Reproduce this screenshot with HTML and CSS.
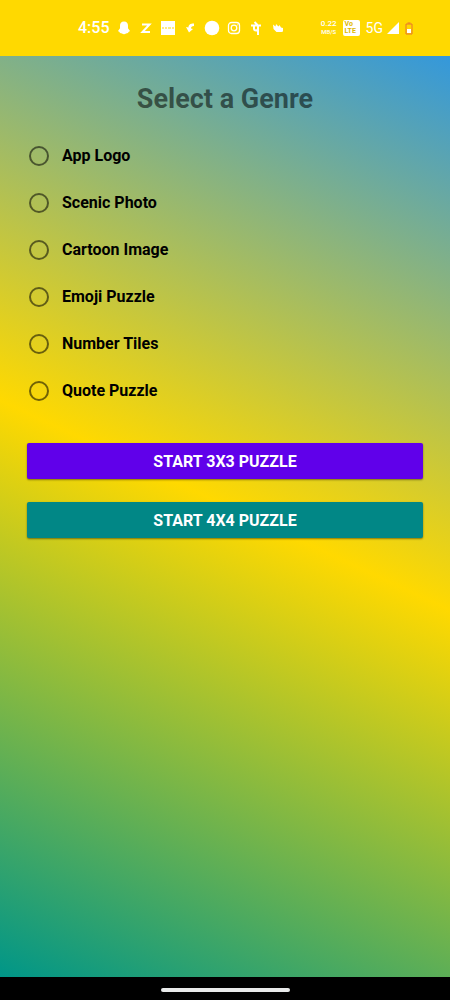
FILE: index.html
```html
<!DOCTYPE html>
<html lang="en">
<head>
<meta charset="utf-8">
<meta name="viewport" content="width=device-width, initial-scale=1">
<title>Select a Genre</title>
<link rel="stylesheet" href="styles.css">
</head>
<body>
<div class="screen">
  <header class="status">
    <div class="status-left">
      <span class="clock">4:55</span>
      <svg class="icon" viewBox="0 0 16 16" aria-hidden="true"><path d="M8 1.500c-2.800 0-4 1.800-4 4.200v2.600L2 11c1 .5 1.500 1 2 2 1.500 0 2.500 1.200 4 1.200s2.500-1.200 4-1.200c.5-1 1-1.500 2-2l-2-2.700V5.700c0-2.400-1.200-4.200-4-4.200z"/></svg>
      <svg class="icon line" viewBox="0 0 16 16" aria-hidden="true"><path d="M4 4.500h7.500L4.500 12H12"/></svg>
      <svg class="icon" viewBox="0 0 16 16" aria-hidden="true"><path d="M1 1h14v14H1z"/><path class="cut" d="M2 8h2m1 0h2m1 0h3m1 0h2"/></svg>
      <svg class="icon" viewBox="0 0 16 16" aria-hidden="true"><path d="M12 3.500C8 3.500 6.500 5 6.500 7.500L4 7l3 5.500L11 9 9 8.500c0-1.500.8-2.500 3-2.500z"/></svg>
      <svg class="icon" viewBox="0 0 16 16" aria-hidden="true"><circle cx="8" cy="8" r="7.300"/></svg>
      <svg class="icon thin" viewBox="0 0 16 16" aria-hidden="true"><rect x="2.500" y="2.500" width="11" height="11" rx="3"/><circle cx="8" cy="8" r="2.800"/><path d="M11 4.800h.6"/></svg>
      <svg class="icon line" viewBox="0 0 16 16" aria-hidden="true"><path d="M3 5.500h10M6 5.500v3c0 2.500 4 2.500 4 0M10 5.500V15M9.500 5L6.500 2"/></svg>
      <svg class="icon" viewBox="0 0 16 16" aria-hidden="true"><path d="M3 4.500l2.500 2 .5-2.500 2.500 2.500 1-1.500 1.500 2.500 2 .5v3.500L11.500 12H6.500L3.500 9z"/></svg>
    </div>
    <div class="status-right">
      <span class="speed"><span>0.22</span><span>MB/S</span></span>
      <span class="volte"><span>Vo</span><span>LTE</span></span>
      <span class="network">5G</span>
      <svg class="signal" viewBox="0 0 12 12" aria-hidden="true"><path d="M12 0v12H0z"/></svg>
      <svg class="battery" viewBox="0 0 8 13" aria-hidden="true"><path class="shell" d="M1 2h6v10H1zM2.500 1h3"/><path class="level" d="M2 7h4v4H2z"/></svg>
    </div>
  </header>
  <main class="app">
    <h1 class="title">Select a Genre</h1>
    <form class="form">
      <div class="options" role="radiogroup" aria-label="Select a Genre">
        <label class="option"><input class="radio" type="radio" name="genre">App Logo</label>
        <label class="option"><input class="radio" type="radio" name="genre">Scenic Photo</label>
        <label class="option"><input class="radio" type="radio" name="genre">Cartoon Image</label>
        <label class="option"><input class="radio" type="radio" name="genre">Emoji Puzzle</label>
        <label class="option"><input class="radio" type="radio" name="genre">Number Tiles</label>
        <label class="option"><input class="radio" type="radio" name="genre">Quote Puzzle</label>
      </div>
      <div class="actions">
        <button class="button violet" type="button">START 3X3 PUZZLE</button>
        <button class="button teal" type="button">START 4X4 PUZZLE</button>
      </div>
    </form>
  </main>
  <footer class="navbar"><span class="handle"></span></footer>
</div>
</body>
</html>
```
FILE: styles.css
```css
* { box-sizing: border-box; }

body {
  margin: 0;
  font-family: Roboto, "Liberation Sans", sans-serif;
}

.screen {
  display: flex;
  flex-direction: column;
  min-height: 100vh;
}

.status {
  display: flex;
  align-items: center;
  justify-content: space-between;
  height: 56px;
  padding: 0 37px 0 78px;
  background: #ffd900;
  color: #fff;
}

.status-left {
  display: flex;
  align-items: center;
  gap: 6px;
}

.clock {
  font-size: 16px;
  font-weight: 500;
  line-height: 20px;
}

.icon {
  width: 16px;
  height: 16px;
  fill: #fff;
}

.line {
  fill: none;
  stroke: #fff;
  stroke-width: 2;
}

.thin {
  fill: none;
  stroke: #fff;
  stroke-width: 1.3;
}

.cut { stroke: #ffd900; }

.status-right {
  display: flex;
  align-items: center;
  gap: 6px;
}

.speed {
  display: flex;
  flex-direction: column;
  align-items: center;
  font-size: 8px;
  font-weight: 500;
  line-height: 8px;
}

.speed span + span { font-size: 6px; }

.volte {
  display: flex;
  flex-direction: column;
  justify-content: center;
  width: 17px;
  height: 16px;
  padding-left: 2px;
  border-radius: 2px;
  background: #fff;
  color: #e0b800;
  font-size: 7px;
  font-weight: 700;
  line-height: 7px;
}

.network {
  font-size: 14px;
  line-height: 16px;
}

.signal {
  width: 12px;
  height: 12px;
  margin-left: -2px;
  fill: #fff;
}

.battery {
  width: 8px;
  height: 13px;
}

.shell {
  fill: none;
  stroke: #e8742c;
}

.level { fill: #fff; }

.app {
  flex: 1;
  padding: 25px 27px;
  background: linear-gradient(205deg, #3498db, #ffd900 49%, #009688);
}

.title {
  margin: 0;
  color: rgba(0, 0, 0, 0.54);
  font-size: 27px;
  font-weight: 700;
  line-height: 36px;
  text-align: center;
}

.options {
  display: flex;
  flex-direction: column;
  margin-top: 15px;
}

.option {
  display: flex;
  align-items: center;
  gap: 13px;
  height: 47px;
  padding-left: 2px;
  color: #000;
  font-size: 16px;
  font-weight: 700;
}

.radio {
  width: 20px;
  height: 20px;
  margin: 0;
  border: 2px solid rgba(0, 0, 0, 0.54);
  border-radius: 50%;
  appearance: none;
}

.radio:checked {
  background: rgba(0, 0, 0, 0.54);
  background-clip: content-box;
  padding: 3px;
}

.actions {
  display: flex;
  flex-direction: column;
  gap: 23px;
  margin-top: 29px;
}

.button {
  height: 36px;
  border: 0;
  border-radius: 2px;
  box-shadow: 0 1px 2px rgba(0, 0, 0, 0.45);
  color: #fff;
  font-family: inherit;
  font-size: 16px;
  font-weight: 700;
}

.violet { background: #6000ea; }

.teal { background: #018786; }

.navbar {
  display: flex;
  align-items: center;
  justify-content: center;
  height: 23px;
  padding-top: 3px;
  background: #000;
}

.handle {
  width: 129px;
  height: 4px;
  border-radius: 2px;
  background: #e8eaea;
}
```
